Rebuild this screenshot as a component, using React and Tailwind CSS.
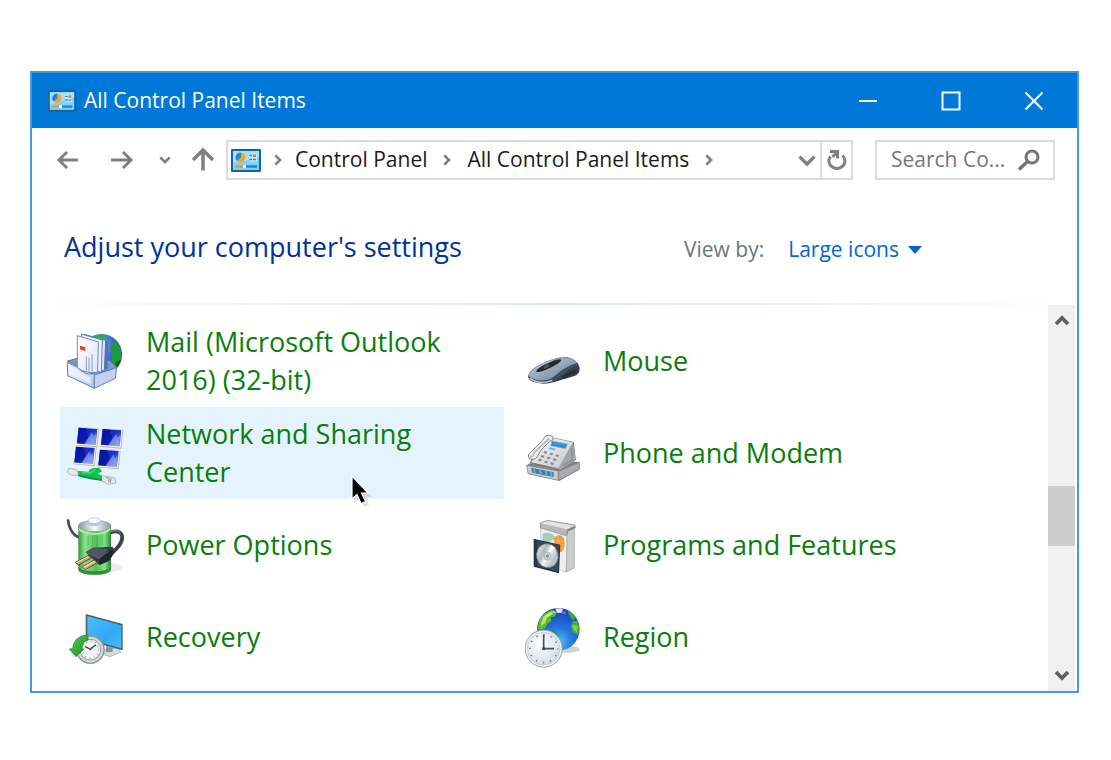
import React from "react";

function PanelIcon({ className }) {
  return (
    <svg viewBox="0 0 30 23" className={className} aria-hidden="true">
      <rect width="30" height="23" rx="1" fill="#17649c" />
      <rect x="2" y="2" width="26" height="19" fill="#7fd3f8" />
      <path d="M2 2H28V8L2 15Z" fill="#9fe0fb" />
      <circle cx="10" cy="8.500" r="4.500" fill="#cdeffc" />
      <path d="M10 8.500V3.500A5 5 0 1 1 6 12Z" fill="#f2a71b" />
      <path d="M10 8.500L6 12A5 5 0 0 1 10 3.500Z" fill="#2a7fd0" />
      <rect x="18" y="4.500" width="8" height="8" fill="#c4ebfb" />
      <path d="M18.500 6.500H21M18.500 10.500H21" stroke="#2a7fd0" strokeWidth="1.500" />
      <rect x="22" y="5.500" width="3" height="2.500" fill="#e8722a" />
      <path d="M22 10.500H25" stroke="#3d86b8" strokeWidth="1.500" />
      <path d="M4 17.500H12" stroke="#e59a1c" strokeWidth="2.400" />
      <path d="M12 17.500H15" stroke="#ffffff" strokeWidth="2.400" />
      <path d="M15 17.500H26" stroke="#1f7fd0" strokeWidth="2.400" />
    </svg>
  );
}

function Stroke({ d, className, w = 2 }) {
  return (
    <svg viewBox="0 0 24 24" className={className} fill="none" stroke="currentColor" strokeWidth={w} aria-hidden="true">
      <path d={d} />
    </svg>
  );
}

const ART = "h-[76px] w-[70px] shrink-0";

function MailArt() {
  return (
    <svg viewBox="0 -6 210 228" className={ART} aria-hidden="true">
      <defs>
        <radialGradient id="mailGlobe" cx=".4" cy=".3" r=".75">
          <stop offset="0" stopColor="#8ab6f5" />
          <stop offset=".6" stopColor="#2f62c4" />
          <stop offset="1" stopColor="#173a80" />
        </radialGradient>
        <linearGradient id="trayLeft" x2="1" y2="1">
          <stop offset="0" stopColor="#f4f8ff" />
          <stop offset="1" stopColor="#b4c7ec" />
        </linearGradient>
        <linearGradient id="envelope" x2="1" y2="1">
          <stop offset="0" stopColor="#ffffff" />
          <stop offset="1" stopColor="#dbe6f8" />
        </linearGradient>
      </defs>
      <circle cx="125" cy="88" r="61" fill="url(#mailGlobe)" />
      <path d="M88 40Q112 22 140 31L132 46L112 52Z" fill="#2bb04a" />
      <path d="M150 66Q160 48 170 52Q188 76 184 108Q176 130 158 136L150 112L158 92Z" fill="#1f9a3c" />
      <path d="M168 112L182 104Q178 124 162 136Z" fill="#0d5f28" />
      <path d="M22 108L60 98L148 106L171 127L103 150Z" fill="#8098cc" stroke="#5671ad" strokeWidth="3" />
      <path d="M78 31L143 50V132L100 140Z" fill="#4f71b7" />
      <path d="M72 28L137 46L133 138L85 128Z" fill="#dce7fa" stroke="#5674b5" strokeWidth="3" />
      <path d="M64 27L127 45L124 142L76 130Z" fill="#eaf1fd" stroke="#5f7dbd" strokeWidth="3" />
      <path d="M52 32L115 51L113 142Q80 146 52 130Z" fill="url(#envelope)" stroke="#6f8bc5" strokeWidth="3" />
      <path d="M60 62L76 67V79L60 73Z" fill="#f03c17" />
      <path d="M79 94V137M87 98V139M96 88V139" stroke="#8d9cc0" strokeWidth="3" />
      <path d="M22 112L52 127Q78 153 103 146V190L23 152Z" fill="url(#trayLeft)" stroke="#6580b8" strokeWidth="3" />
      <path d="M103 150L170 128L166 160L103 190Z" fill="#c3d1ef" stroke="#6580b8" strokeWidth="3" />
      <path d="M28 124L92 158V176L30 146Z" fill="#f5f9ff" opacity=".6" />
    </svg>
  );
}

function NetScreen({ x, y }) {
  return (
    <g transform={`translate(${x} ${y})`}>
      <path d="M2 -2L66 2L60 59L-4 53Z" fill="#b3aea8" />
      <path d="M1 -2L64 2L58 56L-4 51Z" fill="#eeebe6" />
      <path d="M4 0L60 4L55 52L-1 47Z" fill="url(#netBlue)" />
      <path d="M4 0L25 2L33 27L20 49L-1 47Z" fill="#0711a0" opacity=".75" />
      <path d="M37 25L44 14L49 26L56 18L54 52L22 49Z" fill="#b6c6f4" opacity=".5" />
    </g>
  );
}

function NetworkArt() {
  return (
    <svg viewBox="0 0 210 228" className={ART} aria-hidden="true">
      <defs>
        <linearGradient id="netBlue" x2="1" y2="1">
          <stop offset="0" stopColor="#0a16a8" />
          <stop offset=".5" stopColor="#1a30c9" />
          <stop offset="1" stopColor="#7d97ea" />
        </linearGradient>
      </defs>
      <NetScreen x="52" y="38" />
      <NetScreen x="124" y="42" />
      <NetScreen x="44" y="95" />
      <NetScreen x="116" y="104" />
      <path d="M26 160L50 164L56 180L34 181L22 172Z" fill="#e9e9e6" stroke="#b4b9b7" strokeWidth="3" />
      <path d="M124 181L164 188L168 204L144 208L122 196Z" fill="#e5e6e4" stroke="#b4b9b7" strokeWidth="3" />
      <path d="M138 188L148 190L146 201M154 190L150 204" stroke="#8c9290" strokeWidth="3" fill="none" />
      <path d="M54 168L86 170Q88 157 118 158L126 169L114 176L126 183V197L92 192L55 183Z" fill="#10c050" />
      <path d="M55 179L92 187L124 192V197L92 193L55 184Z" fill="#07903a" />
      <path d="M66 173L92 174L106 164" fill="none" stroke="#4fd97c" strokeWidth="4" />
    </svg>
  );
}

function PowerArt() {
  return (
    <svg viewBox="0 -3 210 228" className={ART} aria-hidden="true">
      <defs>
        <linearGradient id="cell">
          <stop offset="0" stopColor="#2f9440" />
          <stop offset=".2" stopColor="#8be58a" />
          <stop offset=".55" stopColor="#4fbf5c" />
          <stop offset=".8" stopColor="#7fe47c" />
          <stop offset="1" stopColor="#2a8238" />
        </linearGradient>
        <linearGradient id="cellCap">
          <stop offset="0" stopColor="#8a9196" />
          <stop offset=".5" stopColor="#fafcfd" />
          <stop offset="1" stopColor="#8d9599" />
        </linearGradient>
      </defs>
      <ellipse cx="136" cy="178" rx="52" ry="14" fill="#c9c9c9" opacity=".35" />
      <path d="M24 34Q26 58 38 74Q48 87 60 88" fill="none" stroke="#454c5e" strokeWidth="8" />
      <path d="M146 76Q176 62 186 82Q192 106 152 138" fill="none" stroke="#3a4056" strokeWidth="11" />
      <path d="M148 72Q172 62 182 76" fill="none" stroke="#8d94a8" strokeWidth="3" />
      <path d="M55 56V185Q60 200 104 200Q148 200 153 185V56Z" fill="url(#cell)" />
      <path d="M55 185Q60 200 104 200Q148 200 153 185V178Q140 190 104 190Q66 190 55 178Z" fill="#328d40" />
      <ellipse cx="104" cy="54" rx="49" ry="17" fill="url(#cellCap)" stroke="#848e90" strokeWidth="2" />
      <path d="M57 60Q104 90 151 60V68Q104 94 57 68Z" fill="#a3efa0" />
      <path d="M85 38V50Q104 60 121 50V38Z" fill="#b9c7d8" />
      <ellipse cx="103" cy="38" rx="18" ry="9" fill="#f7fbff" stroke="#a4b3c4" strokeWidth="2" />
      <path d="M84 84V112M98 86V116M112 86V116M126 82V110" stroke="#388d45" strokeWidth="2" opacity=".6" />
      <path d="M46 163L86 142L94 150L54 172Z" fill="#cda269" stroke="#69431f" strokeWidth="3" />
      <path d="M67 177L107 154L115 162L76 185Z" fill="#d8b180" stroke="#69431f" strokeWidth="3" />
      <path d="M49 164L84 146M70 178L105 158" stroke="#fff1c9" strokeWidth="3" />
      <path d="M77 133L99 119L158 116L166 130L148 158L118 171Z" fill="#353a45" />
      <path d="M77 133L99 119L146 123L118 150Z" fill="#50555f" />
      <path d="M118 150L152 126L162 132L147 158L118 171Z" fill="#20242d" />
      <path d="M79 133L117 151L146 129" fill="none" stroke="#777c86" strokeWidth="2" />
    </svg>
  );
}

function RecoveryArt() {
  return (
    <svg viewBox="0 -18 210 228" className={ART} aria-hidden="true">
      <defs>
        <linearGradient id="monitor" x2="1" y2="1">
          <stop offset="0" stopColor="#4fc0f7" />
          <stop offset=".6" stopColor="#2fa8f6" />
          <stop offset="1" stopColor="#44c0fb" />
        </linearGradient>
        <linearGradient id="arrow" x2="1" y2="1">
          <stop offset="0" stopColor="#5fd053" />
          <stop offset="1" stopColor="#118c22" />
        </linearGradient>
      </defs>
      <path d="M126 133L176 128L182 142L150 155L124 146Z" fill="#d6dadd" stroke="#9aa3a9" strokeWidth="2" />
      <path d="M139 122L158 128V140L137 142Z" fill="#86949c" />
      <path d="M77 27L188 57V136L77 106Z" fill="#4b6069" />
      <path d="M82 33L184 61V130L82 102Z" fill="url(#monitor)" />
      <circle cx="91" cy="134" r="43" fill="#8c969b" />
      <circle cx="91" cy="134" r="39" fill="#d3d8da" />
      <circle cx="91" cy="134" r="31" fill="#f3f5f5" stroke="#90999e" strokeWidth="3" />
      <circle cx="91" cy="134" r="25" fill="none" stroke="#606b70" strokeWidth="4" strokeDasharray="2 11.090" />
      <path d="M75 125L91 132L108 119" fill="none" stroke="#374249" strokeWidth="4" />
      <circle cx="91" cy="132" r="4" fill="#56636a" />
      <path d="M84 89V105Q66 110 66 131L72 132L48 155L28 132L38 131Q40 94 84 89Z" fill="url(#arrow)" stroke="#18832a" strokeWidth="2" />
    </svg>
  );
}

function MouseArt() {
  return (
    <svg viewBox="6 -51 210 228" className={ART} aria-hidden="true">
      <defs>
        <linearGradient id="mouseTop" x2="1" y2="1">
          <stop offset="0" stopColor="#c3d0de" />
          <stop offset=".5" stopColor="#94a7bd" />
          <stop offset="1" stopColor="#5f7288" />
        </linearGradient>
      </defs>
      <path d="M40 105Q44 88 86 68Q130 49 158 52Q190 60 194 84Q195 104 176 109L118 126Q82 137 51 124Q37 116 40 105Z" fill="#35404b" />
      <path d="M41 104Q46 89 86 68Q128 49 157 53Q180 58 187 69Q160 77 138 96L113 116Q81 130 54 119Q39 113 41 104Z" fill="url(#mouseTop)" />
      <path d="M41 108Q60 124 89 121Q108 119 126 102L140 91Q160 77 187 69L190 74Q158 88 142 105L116 124Q80 134 50 123Q40 117 41 108Z" fill="#42505f" />
      <path d="M44 115Q76 136 112 121" fill="none" stroke="#c4ced8" strokeWidth="4" />
      <path d="M64 95Q62 89 85 76L119 61Q137 53 139 60Q138 68 103 85Q75 99 64 95Z" fill="#25292f" />
      <path d="M85 84Q87 78 100 73Q106 73 102 78L90 86Z" fill="#555b62" />
      <path d="M123 60Q133 54 136 58" fill="none" stroke="#36a44e" strokeWidth="4" />
      <path d="M141 109L184 86V97L146 116Z" fill="#252d37" />
    </svg>
  );
}

function PhoneArt() {
  const keys = [[88, 333], [106, 338], [124, 343], [80, 345], [98, 350], [116, 355], [72, 356], [90, 362], [108, 367]];
  return (
    <svg viewBox="6 225 210 228" className={ART} aria-hidden="true">
      <defs>
        <linearGradient id="phoneBody" x2="1" y2="1">
          <stop offset="0" stopColor="#f7f7f7" />
          <stop offset="1" stopColor="#c5c7c8" />
        </linearGradient>
      </defs>
      <path d="M36 375L64 358L192 366L194 388L134 422L40 402Z" fill="#808586" />
      <path d="M35 376L130 393V421L39 401Z" fill="#c9cdce" stroke="#747979" strokeWidth="2" />
      <path d="M130 394L193 367V388L131 421Z" fill="#aaadae" stroke="#747979" strokeWidth="2" />
      <path d="M49 383L116 397V411L51 398Z" fill="#4b7691" />
      <path d="M56 385L60 399M74 388L78 403M92 392L95 407M108 396L110 409" stroke="#4fb4e6" strokeWidth="6" />
      <path d="M105 292L175 307L181 360L135 391L46 367L60 345L91 300Z" fill="#999d9e" stroke="#727777" strokeWidth="3" />
      <path d="M105 292L174 307L131 384L48 367Z" fill="url(#phoneBody)" />
      <path d="M174 307L181 360L135 390L131 384Z" fill="#a3a7a8" />
      <path d="M169 326L173 358L144 377" fill="none" stroke="#8a8f90" strokeWidth="4" />
      <path d="M111 303L158 312L151 326L107 317Z" fill="#2389d8" stroke="#9bb4c2" strokeWidth="2" />
      <path d="M114 309L151 316" stroke="#4aa5e8" strokeWidth="3" />
      <path d="M104 322L122 326L120 331L102 327Z" fill="#54b8e6" />
      {keys.map(([x, y]) => (
        <path key={`${x}-${y}`} d={`M${x} ${y}l9 2l-3 6l-9-2Z`} fill="#858b8e" />
      ))}
      <path d="M90 289Q100 282 113 289L115 298L103 305L78 330L67 350Q59 361 44 357Q38 351 41 342L49 335L82 302Z" fill="#eeeeee" stroke="#848989" strokeWidth="3" />
      <path d="M103 295L57 339Q56 350 45 351" fill="none" stroke="#b7bbbc" strokeWidth="5" />
    </svg>
  );
}

function ProgramsArt() {
  return (
    <svg viewBox="6 -9 210 228" className={ART} aria-hidden="true">
      <defs>
        <linearGradient id="disc" x2="1" y2="1">
          <stop offset="0" stopColor="#ffffff" />
          <stop offset=".35" stopColor="#adb6bc" />
          <stop offset=".5" stopColor="#f5f6f7" />
          <stop offset=".75" stopColor="#b8c0c6" />
          <stop offset="1" stopColor="#eef0f1" />
        </linearGradient>
      </defs>
      <path d="M77 46L157 64L153 186L78 164Z" fill="#eeefef" stroke="#b4b7b8" strokeWidth="2" />
      <path d="M157 62L178 51V174L154 186Z" fill="#cbcdcf" stroke="#9b9fa1" strokeWidth="2" />
      <path d="M83 72Q94 64 112 72L126 87L82 101Z" fill="#a3d0b8" />
      <path d="M117 93Q118 75 134 75Q149 78 149 101Q148 125 134 127Q120 118 117 93Z" fill="#f49b35" />
      <path d="M119 93H148M127 78L143 122" stroke="#ffc36e" strokeWidth="3" opacity=".6" />
      <path d="M75 39L98 31L180 45L181 54L158 64L153 77L77 54Z" fill="#b5b9bb" stroke="#868b8d" strokeWidth="2" />
      <path d="M77 40L98 33L177 47L156 58Z" fill="#e2e4e5" />
      <path d="M156 59L180 48V54L160 64L155 76Z" fill="#858b8e" />
      <path d="M56 86L136 104L132 190L56 170Z" fill="#273548" />
      <path d="M66 91L133 106L129 184L66 167Z" fill="#3a475b" />
      <ellipse cx="97" cy="137" rx="32" ry="36" transform="rotate(-14 97 137)" fill="url(#disc)" stroke="#737d85" strokeWidth="2" />
      <path d="M99 131L108 105L121 113Z" fill="#ffffff" opacity=".9" />
      <ellipse cx="97" cy="138" rx="10" ry="12" fill="#d7dcdf" stroke="#8c989f" strokeWidth="2" />
      <ellipse cx="97" cy="138" rx="4" ry="5" fill="#77828c" />
    </svg>
  );
}

function RegionArt() {
  return (
    <svg viewBox="6 267 210 228" className={ART} aria-hidden="true">
      <defs>
        <radialGradient id="earth" cx=".5" cy=".8" r=".8">
          <stop offset="0" stopColor="#4ec6f5" />
          <stop offset=".4" stopColor="#2678e0" />
          <stop offset="1" stopColor="#1a3cae" />
        </radialGradient>
        <radialGradient id="dial" cx=".4" cy=".35" r=".7">
          <stop offset="0" stopColor="#ffffff" />
          <stop offset="1" stopColor="#d3dce3" />
        </radialGradient>
      </defs>
      <ellipse cx="154" cy="418" rx="40" ry="11" fill="#a5a5a5" opacity=".5" />
      <circle cx="130" cy="358" r="64" fill="url(#earth)" />
      <path d="M73 331Q86 307 112 299L126 308L118 320L107 321L109 333L97 341L91 355L78 359L67 357Z" fill="#59b936" />
      <path d="M80 333Q91 314 108 307L112 312L95 325L90 340L77 347Z" fill="#bee75a" />
      <path d="M121 296Q133 292 144 298L138 308H127Z" fill="#d9edf3" />
      <path d="M158 304Q173 309 183 324L174 331L165 322Z" fill="#36aa40" />
      <path d="M173 334L188 332Q196 353 189 374L175 369L167 352Z" fill="#41b435" />
      <path d="M172 344L188 349L186 366L177 361Z" fill="#82d345" />
      <path d="M104 357L119 362L131 377L125 398L117 401Z" fill="#248c67" />
      <path d="M83 326Q116 294 153 310" fill="none" stroke="#ffffff" strokeWidth="7" opacity=".3" />
      <circle cx="86" cy="416" r="57" fill="#9caab4" />
      <circle cx="86" cy="416" r="54" fill="#eef2f4" />
      <circle cx="86" cy="416" r="49" fill="url(#dial)" stroke="#b6c2ca" strokeWidth="2" />
      <circle cx="86" cy="416" r="42" fill="none" stroke="#627888" strokeWidth="5" strokeDasharray="4 17.990" strokeDashoffset="2" />
      <path d="M86 374V416H117" fill="none" stroke="#35536b" strokeWidth="5" />
      <circle cx="86" cy="416" r="5" fill="#35536b" />
    </svg>
  );
}

const ITEMS = [
  { label: "Mail (Microsoft Outlook 2016) (32-bit)", Art: MailArt },
  { label: "Mouse", Art: MouseArt },
  { label: "Network and Sharing Center", Art: NetworkArt, active: true },
  { label: "Phone and Modem", Art: PhoneArt },
  { label: "Power Options", Art: PowerArt },
  { label: "Programs and Features", Art: ProgramsArt },
  { label: "Recovery", Art: RecoveryArt },
  { label: "Region", Art: RegionArt },
];

function TitleBar() {
  return (
    <header className="flex h-[55px] items-center bg-[#0078d7] pr-[2px] pl-4 text-white">
      <PanelIcon className="h-[22px] w-7" />
      <h1 className="ml-2 flex-1 text-[21px]">All Control Panel Items</h1>
      <div className="flex h-full">
        <button aria-label="Minimize" className="flex w-[83px] items-center justify-center">
          <Stroke className="h-6 w-6" d="M3 12H21" />
        </button>
        <button aria-label="Maximize" className="flex w-[83px] items-center justify-center">
          <Stroke className="h-6 w-6" d="M3.500 3.500H20.500V20.500H3.500Z" />
        </button>
        <button aria-label="Close" className="flex w-[83px] items-center justify-center">
          <Stroke className="h-6 w-6" d="M3.500 3.500L20.500 20.500M20.500 3.500L3.500 20.500" />
        </button>
      </div>
    </header>
  );
}

function Crumb({ className }) {
  return <Stroke className={`h-4 w-4 shrink-0 text-[#808080] ${className}`} w={4} d="M8 5L15 12L8 19" />;
}

function NavBar() {
  return (
    <nav className="flex items-center pt-3 pr-[22px] pl-6 text-[#808080]">
      <button aria-label="Back">
        <Stroke className="h-6 w-6" w={3} d="M22 12H3M11 4L3 12L11 20" />
      </button>
      <button aria-label="Forward" className="ml-[30px]">
        <Stroke className="h-6 w-6" w={3} d="M1 12H21M13 4L21 12L13 20" />
      </button>
      <button aria-label="Recent locations" className="ml-[23px]">
        <Stroke className="h-4 w-4" w={4} d="M5 8L12 15L19 8" />
      </button>
      <button aria-label="Up" className="ml-4">
        <Stroke className="h-7 w-7" w={3} d="M12 21V4M3.500 12L12 3.500L20.500 12" />
      </button>
      <div className="ml-[9px] flex h-10 min-w-0 flex-1 items-center border-2 border-[#dcdcdc] text-[21px] text-[#1a1a1a]">
        <PanelIcon className="ml-[3px] h-[23px] w-[30px] shrink-0" />
        <Crumb className="mx-[9px]" />
        <a href="#control-panel" className="whitespace-nowrap">Control Panel</a>
        <Crumb className="mx-3" />
        <a href="#all-items" className="whitespace-nowrap">All Control Panel Items</a>
        <Crumb className="mx-3" />
        <button aria-label="Previous locations" className="ml-auto flex h-full items-center px-[3px] text-[#808080]">
          <Stroke className="h-5 w-5" w={4} d="M3 8L12 17L21 8" />
        </button>
        <button aria-label="Refresh" className="flex h-full w-[31px] items-center justify-center border-l-2 border-[#dcdcdc]">
          <svg viewBox="0 0 24 24" className="h-6 w-6" fill="none" stroke="#808080" strokeWidth="3" aria-hidden="true">
            <path d="M17.500 7.500A8 7.500 0 1 1 5.500 8.500" />
            <path d="M5 3.500H12.500V10.500M12.500 3.500L7.500 9" />
          </svg>
        </button>
      </div>
      <div className="ml-[22px] flex h-10 w-[180px] shrink-0 items-center border-2 border-[#dcdcdc] pr-3 pl-[14px]">
        <input
          type="text"
          aria-label="Search Control Panel"
          placeholder="Search Co..."
          className="min-w-0 flex-1 bg-transparent text-[21px] text-[#333] outline-none placeholder:text-[#767676]"
        />
        <svg viewBox="0 0 24 24" className="h-6 w-6 shrink-0" fill="none" stroke="#757575" aria-hidden="true">
          <circle cx="15" cy="9" r="6" strokeWidth="3" />
          <path d="M10.500 13.500L2 21.500" strokeWidth="3.500" />
        </svg>
      </div>
    </nav>
  );
}

function ViewHeader() {
  return (
    <div className="flex h-[123px] items-center pt-4 pl-8">
      <h2 className="w-[620px] pb-1 text-[27px] whitespace-nowrap text-[#003399]">Adjust your computer's settings</h2>
      <label htmlFor="view-by" className="text-[21px] whitespace-nowrap text-[#6a7480]">View by:</label>
      <div className="ml-6 flex items-center text-[#0066cc]">
        <select id="view-by" className="appearance-none bg-transparent text-[21px] outline-none">
          <option>Large icons</option>
        </select>
        <svg viewBox="0 0 14 8" className="ml-[9px] h-2 w-[14px]" fill="currentColor" aria-hidden="true">
          <path d="M0 0H14L7 8Z" />
        </svg>
      </div>
    </div>
  );
}

function Pointer() {
  return (
    <svg viewBox="0 0 24 36" className="absolute top-[67px] left-[289px] h-9 w-6" aria-hidden="true">
      <path d="M5 5V29L11 25L15 33L20 31L17 23H23Z" fill="#000" opacity=".12" />
      <path d="M3 2V25L8 20.500L12 29.500L16.500 27.500L12.500 19H19Z" fill="#000" stroke="#fff" strokeWidth="1.200" />
    </svg>
  );
}

function Item({ label, Art, active }) {
  return (
    <li className="relative">
      <a href="#item" className={`flex h-[92px] items-center gap-4 ${active ? "bg-[#e5f3ff]" : ""}`}>
        <Art />
        <span className="flex-1 pr-2 text-[27px] leading-[38px] text-[#0a7d0a]">{label}</span>
      </a>
      {active && <Pointer />}
    </li>
  );
}

function ScrollBar() {
  return (
    <div className="mr-[2px] flex w-[27px] shrink-0 flex-col items-center bg-[#f0f0f0] text-[#606060]">
      <button aria-label="Scroll up" className="flex h-8 w-full items-center justify-center">
        <Stroke className="h-[18px] w-[18px]" w={5} d="M4 16L12 8L20 16" />
      </button>
      <div className="flex w-full flex-1 flex-col">
        <div className="flex-[150]" />
        <div className="h-[60px] bg-[#cdcdcd]" />
        <div className="flex-[113]" />
      </div>
      <button aria-label="Scroll down" className="flex h-8 w-full items-center justify-center">
        <Stroke className="h-[18px] w-[18px]" w={5} d="M4 8L12 16L20 8" />
      </button>
    </div>
  );
}

export default function App() {
  return (
    <div className="flex min-h-screen flex-col bg-white pt-[71px] pr-8 pb-[67px] pl-[30px] font-['Open_Sans',sans-serif]">
      <main className="flex flex-1 flex-col border-2 border-[#4a98dc] bg-white">
        <TitleBar />
        <NavBar />
        <ViewHeader />
        <div className="h-[2px] bg-linear-to-r from-white via-[#d9e6f3] to-white" />
        <div className="flex flex-1">
          <ul className="grid flex-1 grid-cols-[repeat(auto-fill,444px)] content-start gap-x-[13px] pt-[10px] pl-7">
            {ITEMS.map((item) => (
              <Item key={item.label} {...item} />
            ))}
          </ul>
          <ScrollBar />
        </div>
      </main>
    </div>
  );
}
